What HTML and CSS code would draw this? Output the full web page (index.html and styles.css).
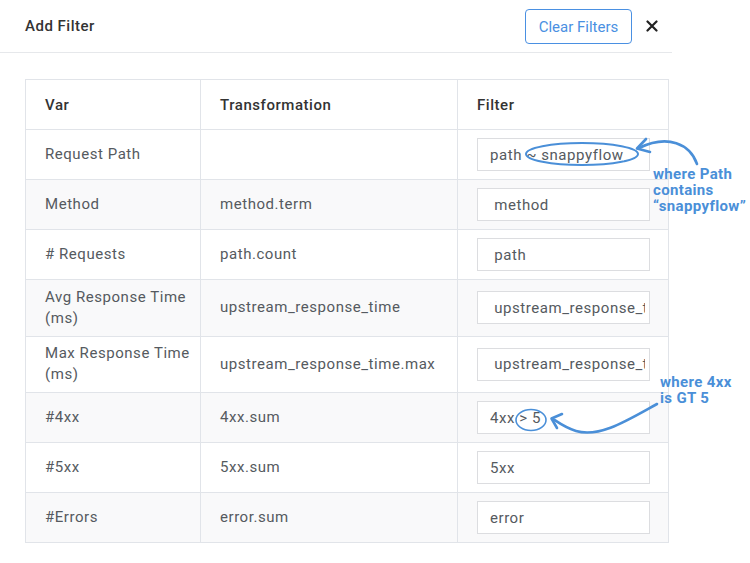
FILE: index.html
```html
<!DOCTYPE html>
<html lang="en">
<head>
<meta charset="utf-8">
<title>Add Filter</title>
<link rel="stylesheet" href="styles.css">
</head>
<body>
<div class="modal">
  <header class="modal-head">
    <h1 class="modal-title">Add Filter</h1>
    <div class="modal-actions">
      <button class="btn-outline" type="button">Clear Filters</button>
      <button class="btn-close" type="button" aria-label="Close">
        <svg width="12" height="12" viewBox="0 0 12 12"><path d="M1.5 1.5 L10.5 10.5 M10.5 1.5 L1.5 10.5" stroke="#222" stroke-width="2.2" stroke-linecap="round"/></svg>
      </button>
    </div>
  </header>
  <div class="modal-body">
    <table class="filter-table">
      <colgroup>
        <col class="c-var"><col class="c-trans"><col class="c-filter">
      </colgroup>
      <thead>
        <tr><th>Var</th><th>Transformation</th><th>Filter</th></tr>
      </thead>
      <tbody>
        <tr><td>Request Path</td><td></td><td><input class="f-input" value="path ~ snappyflow"></td></tr>
        <tr><td>Method</td><td>method.term</td><td><input class="f-input" value=" method"></td></tr>
        <tr><td># Requests</td><td>path.count</td><td><input class="f-input" value=" path"></td></tr>
        <tr class="tall"><td>Avg Response Time (ms)</td><td>upstream_response_time</td><td><input class="f-input" value=" upstream_response_time"></td></tr>
        <tr class="tall"><td>Max Response Time (ms)</td><td>upstream_response_time.max</td><td><input class="f-input" value=" upstream_response_time.max"></td></tr>
        <tr><td>#4xx</td><td>4xx.sum</td><td><input class="f-input" value="4xx > 5"></td></tr>
        <tr><td>#5xx</td><td>5xx.sum</td><td><input class="f-input" value="5xx"></td></tr>
        <tr><td>#Errors</td><td>error.sum</td><td><input class="f-input" value="error"></td></tr>
      </tbody>
    </table>
  </div>
</div>

<svg class="annot-svg" width="750" height="563" viewBox="0 0 750 563">
  <g fill="none" stroke="#4a8fd8" stroke-linecap="round" stroke-linejoin="round">
    <ellipse cx="582" cy="154" rx="56" ry="11" stroke-width="2"/>
    <path d="M697 164 C690 144 668 134 639 148" stroke-width="2.6"/>
    <path d="M646 139 L637 148.5 L650 152" stroke-width="2.6"/>
    <ellipse cx="531" cy="420" rx="15" ry="10.5" stroke-width="1.6"/>
    <path d="M657 404 C628 420 600 438 576 431 C566 428 559 423 553 419" stroke-width="2.6"/>
    <path d="M562 414 L551.5 418.5 L557 428" stroke-width="2.6"/>
  </g>
</svg>
<div class="note note-path">where Path<br>contains<br>“snappyflow”</div>
<div class="note note-4xx">where 4xx<br>is GT 5</div>
</body>
</html>
```
FILE: styles.css
```css
* { box-sizing: border-box; }
html, body {
  margin: 0;
  padding: 0;
  background: #ffffff;
  font-family: Roboto, "Noto Sans", "Liberation Sans", sans-serif;
}
.modal {
  width: 672px;
}
.modal-head {
  height: 53px;
  display: flex;
  align-items: center;
  justify-content: space-between;
  padding: 0 14px 0 25px;
  border-bottom: 1px solid #e6e8eb;
}
.modal-title {
  margin: 0;
  font-size: 15px;
  font-weight: 500;
  letter-spacing: 0.5px;
  color: #333333;
}
.modal-actions {
  display: flex;
  align-items: center;
  gap: 14px;
}
.btn-outline {
  width: 107px;
  height: 35px;
  border: 1px solid #4a90e2;
  border-radius: 4px;
  background: #fff;
  color: #4a90e2;
  font-family: inherit;
  font-size: 15px;
  padding: 0;
  margin-top: 1px;
}
.btn-close {
  border: 0;
  background: none;
  padding: 0;
  width: 12px;
  height: 12px;
  display: flex;
}
.modal-body {
  padding: 26px 0 0 25px;
}
.filter-table {
  width: 643px;
  border-collapse: collapse;
  table-layout: fixed;
  border: 1px solid #e1e4e9;
}
.c-var { width: 175px; }
.c-trans { width: 257px; }
.c-filter { width: 211px; }
.filter-table th,
.filter-table td {
  border: 1px solid #e1e4e9;
  padding: 0 19px;
  text-align: left;
  vertical-align: middle;
  font-size: 15px;
  letter-spacing: 0.55px;
  height: 50px;
}
.filter-table th:first-child,
.filter-table td:first-child { padding: 0 6px 0 19px; }
.filter-table th {
  font-weight: 500;
  color: #333333;
}
.filter-table td {
  color: #555a60;
  line-height: 21px;
}
.filter-table tr.tall td { height: 56.5px; }
.filter-table tbody tr:nth-child(even) td { background: #f9f9fa; }
.filter-table td:last-child { padding: 0 18px 0 19px; }
.f-input {
  display: block;
  width: 173px;
  height: 33px;
  border: 1px solid #dcdde0;
  background: #fff;
  padding: 0 4px 0 12px;
  font-family: inherit;
  font-size: 15px;
  letter-spacing: 0.55px;
  color: #555a60;
  outline: none;
}
.annot-svg {
  position: absolute;
  left: 0;
  top: 0;
  pointer-events: none;
}
.note {
  position: absolute;
  color: #4a8fd8;
  font-weight: 700;
  font-size: 15px;
  line-height: 16px;
  letter-spacing: 0.35px;
}
.note-path { left: 653px; top: 166px; }
.note-4xx { left: 660px; top: 374px; }
```
